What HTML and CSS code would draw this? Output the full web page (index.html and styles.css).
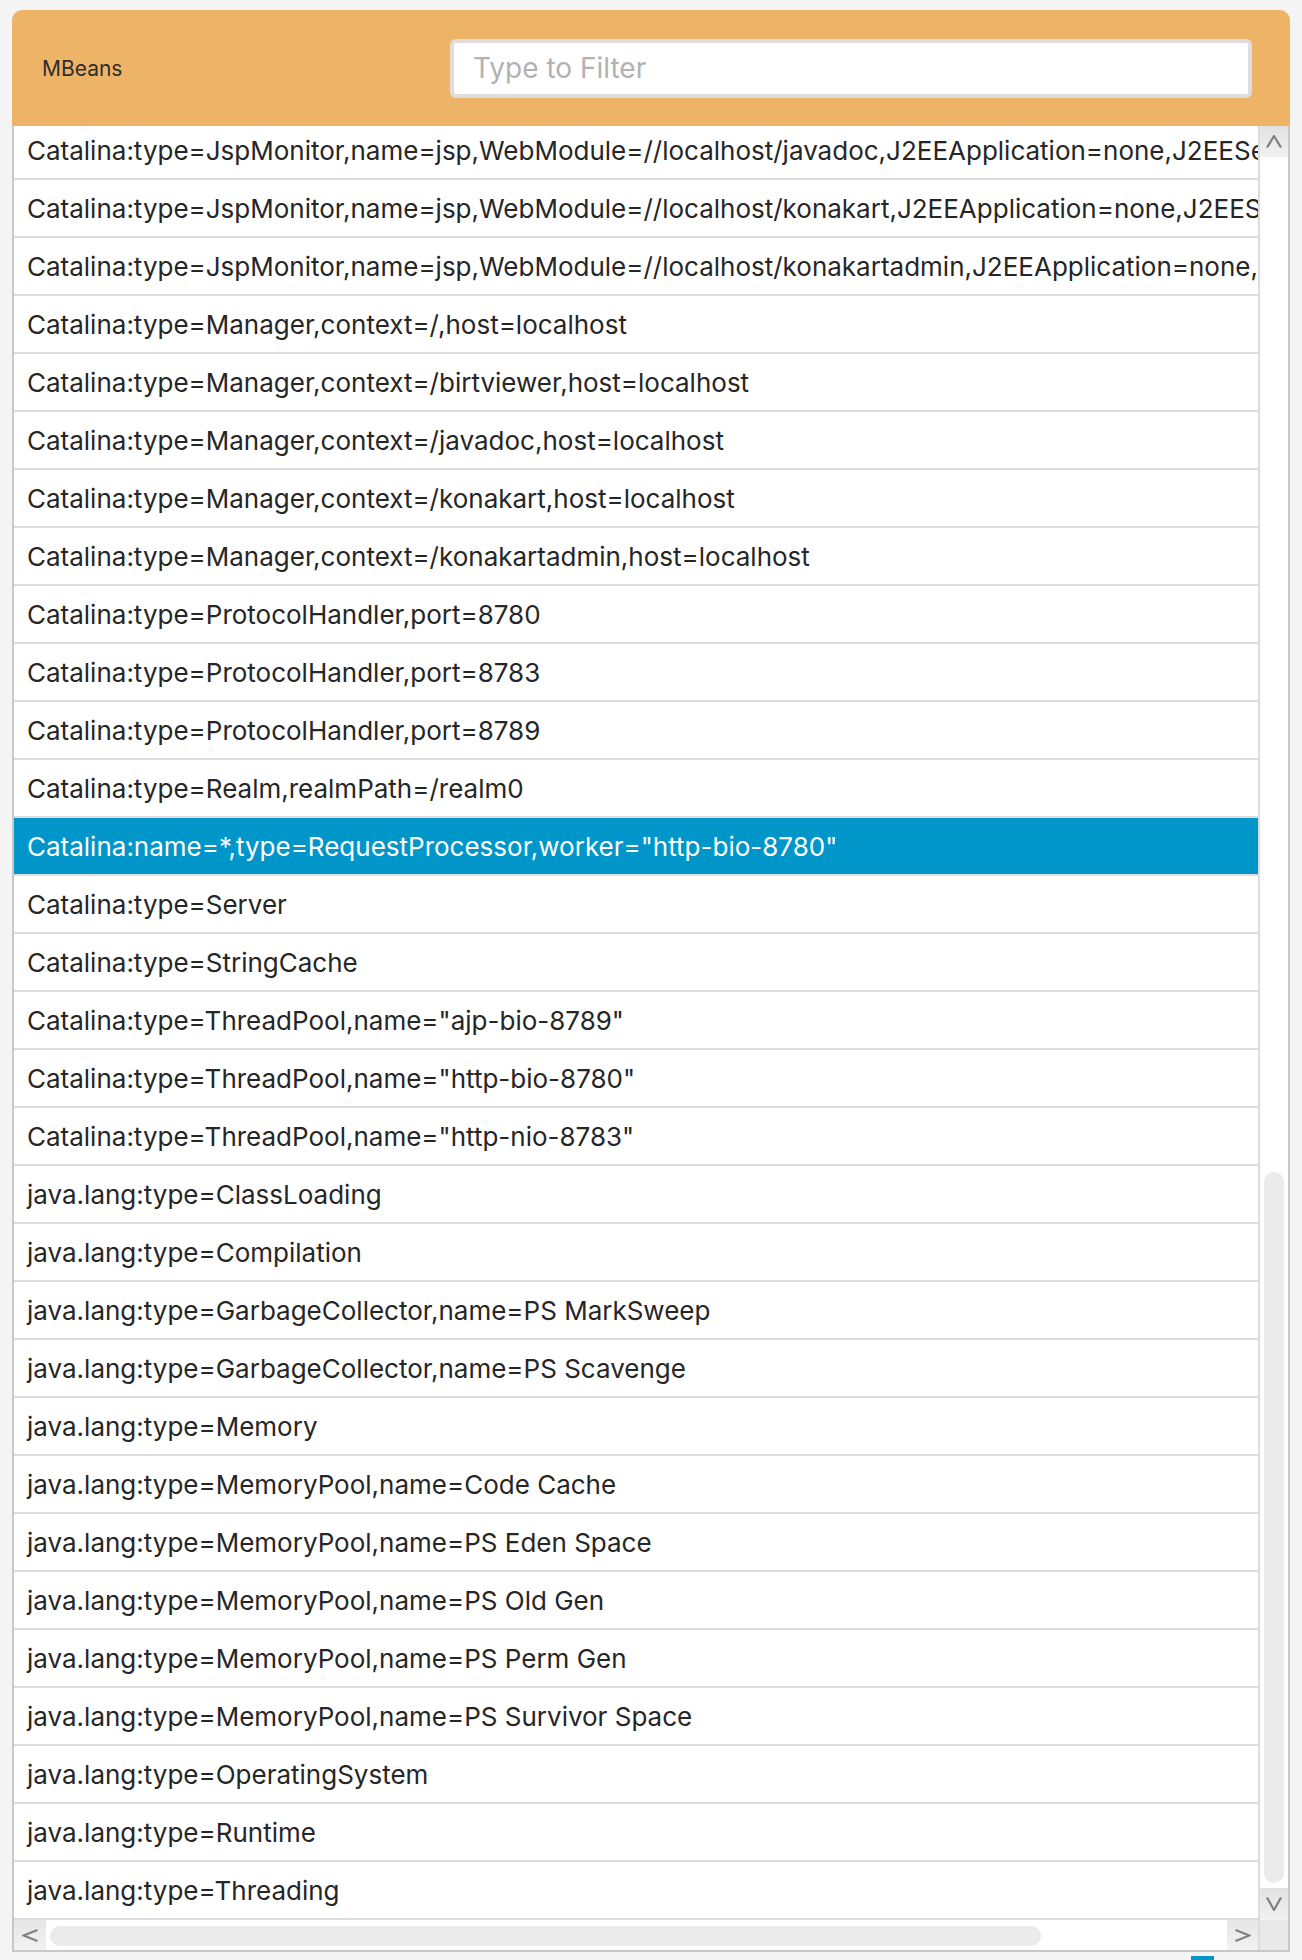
FILE: index.html
```html
<!DOCTYPE html>
<html>
<head>
<meta charset="utf-8">
<link rel="stylesheet" href="styles.css">
</head>
<body>
<div class="panel">
  <div class="header">
    <span class="title">MBeans</span>
    <input class="filter" type="text" placeholder="Type to Filter">
  </div>
  <div class="body">
    <div class="list">
      <div class="rows">
        <div class="row">Catalina:type=JspMonitor,name=jsp,WebModule=//localhost/javadoc,J2EEApplication=none,J2EEServer=none</div>
        <div class="row">Catalina:type=JspMonitor,name=jsp,WebModule=//localhost/konakart,J2EEApplication=none,J2EEServer=none</div>
        <div class="row">Catalina:type=JspMonitor,name=jsp,WebModule=//localhost/konakartadmin,J2EEApplication=none,J2EEServer=none</div>
        <div class="row">Catalina:type=Manager,context=/,host=localhost</div>
        <div class="row">Catalina:type=Manager,context=/birtviewer,host=localhost</div>
        <div class="row">Catalina:type=Manager,context=/javadoc,host=localhost</div>
        <div class="row">Catalina:type=Manager,context=/konakart,host=localhost</div>
        <div class="row">Catalina:type=Manager,context=/konakartadmin,host=localhost</div>
        <div class="row">Catalina:type=ProtocolHandler,port=8780</div>
        <div class="row">Catalina:type=ProtocolHandler,port=8783</div>
        <div class="row">Catalina:type=ProtocolHandler,port=8789</div>
        <div class="row">Catalina:type=Realm,realmPath=/realm0</div>
        <div class="row sel">Catalina:name=*,type=RequestProcessor,worker="http-bio-8780"</div>
        <div class="row">Catalina:type=Server</div>
        <div class="row">Catalina:type=StringCache</div>
        <div class="row">Catalina:type=ThreadPool,name="ajp-bio-8789"</div>
        <div class="row">Catalina:type=ThreadPool,name="http-bio-8780"</div>
        <div class="row">Catalina:type=ThreadPool,name="http-nio-8783"</div>
        <div class="row">java.lang:type=ClassLoading</div>
        <div class="row">java.lang:type=Compilation</div>
        <div class="row">java.lang:type=GarbageCollector,name=PS MarkSweep</div>
        <div class="row">java.lang:type=GarbageCollector,name=PS Scavenge</div>
        <div class="row">java.lang:type=Memory</div>
        <div class="row">java.lang:type=MemoryPool,name=Code Cache</div>
        <div class="row">java.lang:type=MemoryPool,name=PS Eden Space</div>
        <div class="row">java.lang:type=MemoryPool,name=PS Old Gen</div>
        <div class="row">java.lang:type=MemoryPool,name=PS Perm Gen</div>
        <div class="row">java.lang:type=MemoryPool,name=PS Survivor Space</div>
        <div class="row">java.lang:type=OperatingSystem</div>
        <div class="row">java.lang:type=Runtime</div>
        <div class="row">java.lang:type=Threading</div>
      </div>
    </div>
    <div class="vscroll">
      <div class="sbtn vbtn"><svg width="16" height="13" viewBox="0 0 16 13"><polyline points="1,12.5 8,1 15,12.5" fill="none" stroke="#808080" stroke-width="2.2"/></svg></div>
      <div class="vtrack"><div class="vthumb"></div></div>
      <div class="sbtn vbtn down"><svg width="16" height="14" viewBox="0 0 16 14"><polyline points="1,0.5 8,13 15,0.5" fill="none" stroke="#808080" stroke-width="2.2"/></svg></div>
    </div>
    <div class="hscroll">
      <div class="sbtn hbtn"><svg width="16" height="13" viewBox="0 0 16 13"><polyline points="15.5,1 1.5,6.5 15.5,12" fill="none" stroke="#808080" stroke-width="2.2"/></svg></div>
      <div class="htrack"><div class="hthumb"></div></div>
      <div class="sbtn hbtn right"><svg width="16" height="13" viewBox="0 0 16 13"><polyline points="0.5,1 14.5,6.5 0.5,12" fill="none" stroke="#808080" stroke-width="2.2"/></svg></div>
    </div>
    <div class="corner"></div>
  </div>
</div>
<div class="peek"></div>
</body>
</html>
```
FILE: styles.css
```css
html, body {
  margin: 0;
  background: #f4f4f4;
}
body {
  padding: 10px 12px 0;
  height: 1960px;
  box-sizing: border-box;
  overflow: hidden;
  font-family: Inter, "Noto Sans", "Liberation Sans", sans-serif;
}
.panel {
  width: 1278px;
}
.header {
  height: 116px;
  background: #edb468;
  border-radius: 10px 10px 0 0;
  display: flex;
  align-items: center;
  padding: 0 38px 0 30px;
  box-sizing: border-box;
}
.title {
  font-size: 21px;
  color: #2e2e2e;
}
.filter {
  margin-left: auto;
  width: 802px;
  height: 59px;
  box-sizing: border-box;
  border: 4px solid #dedede;
  border-radius: 6px;
  background: #fff;
  padding: 0 0 0 19px;
  font-size: 28px;
  font-family: inherit;
  color: #333;
  outline: none;
}
.filter::placeholder {
  color: #b2b2b2;
}
.body {
  display: grid;
  grid-template-columns: 1244px 30px;
  grid-template-rows: 1794px 30px;
  border: 2px solid #c8c8c8;
  border-top: 0;
  background: #fff;
}
.list {
  overflow: hidden;
  background: #fff;
}
.rows {
  margin-top: -4px;
}
.row {
  height: 56px;
  border-bottom: 2px solid #dcdcdc;
  display: flex;
  align-items: center;
  padding-left: 13px;
  white-space: nowrap;
  overflow: hidden;
  font-size: 26px;
  color: #262626;
}
.row.sel {
  background: #0096c9;
  color: #fff;
}
.vscroll {
  border-left: 2px solid #dcdcdc;
  display: flex;
  flex-direction: column;
  background: #fff;
}
.sbtn {
  display: flex;
  align-items: center;
  justify-content: center;
}
.vbtn {
  height: 31px;
  background: linear-gradient(#e1e1e1, #f1f1f1);
}
.vbtn.down {
  height: 32px;
}
.vtrack {
  flex: 1;
  display: flex;
  align-items: flex-end;
  padding: 0 4px 5px;
}
.vthumb {
  width: 20px;
  height: 711px;
  border-radius: 10px;
  background: #ebebeb;
}
.hscroll {
  display: flex;
  background: #fff;
}
.hbtn {
  width: 32px;
  background: linear-gradient(#e6e6e6, #f2f2f2);
}
.hbtn.right {
  width: 31px;
}
.htrack {
  flex: 1;
  display: flex;
  align-items: flex-start;
  padding: 6px 4px 0;
}
.hthumb {
  width: 991px;
  height: 20px;
  border-radius: 10px;
  background: #ebebeb;
}
.corner {
  background: #e9e9e9;
  border-left: 2px solid #dcdcdc;
}
.peek {
  margin: 4px 0 0 1179px;
  width: 23px;
  height: 10px;
  background: #0096c9;
}
```
